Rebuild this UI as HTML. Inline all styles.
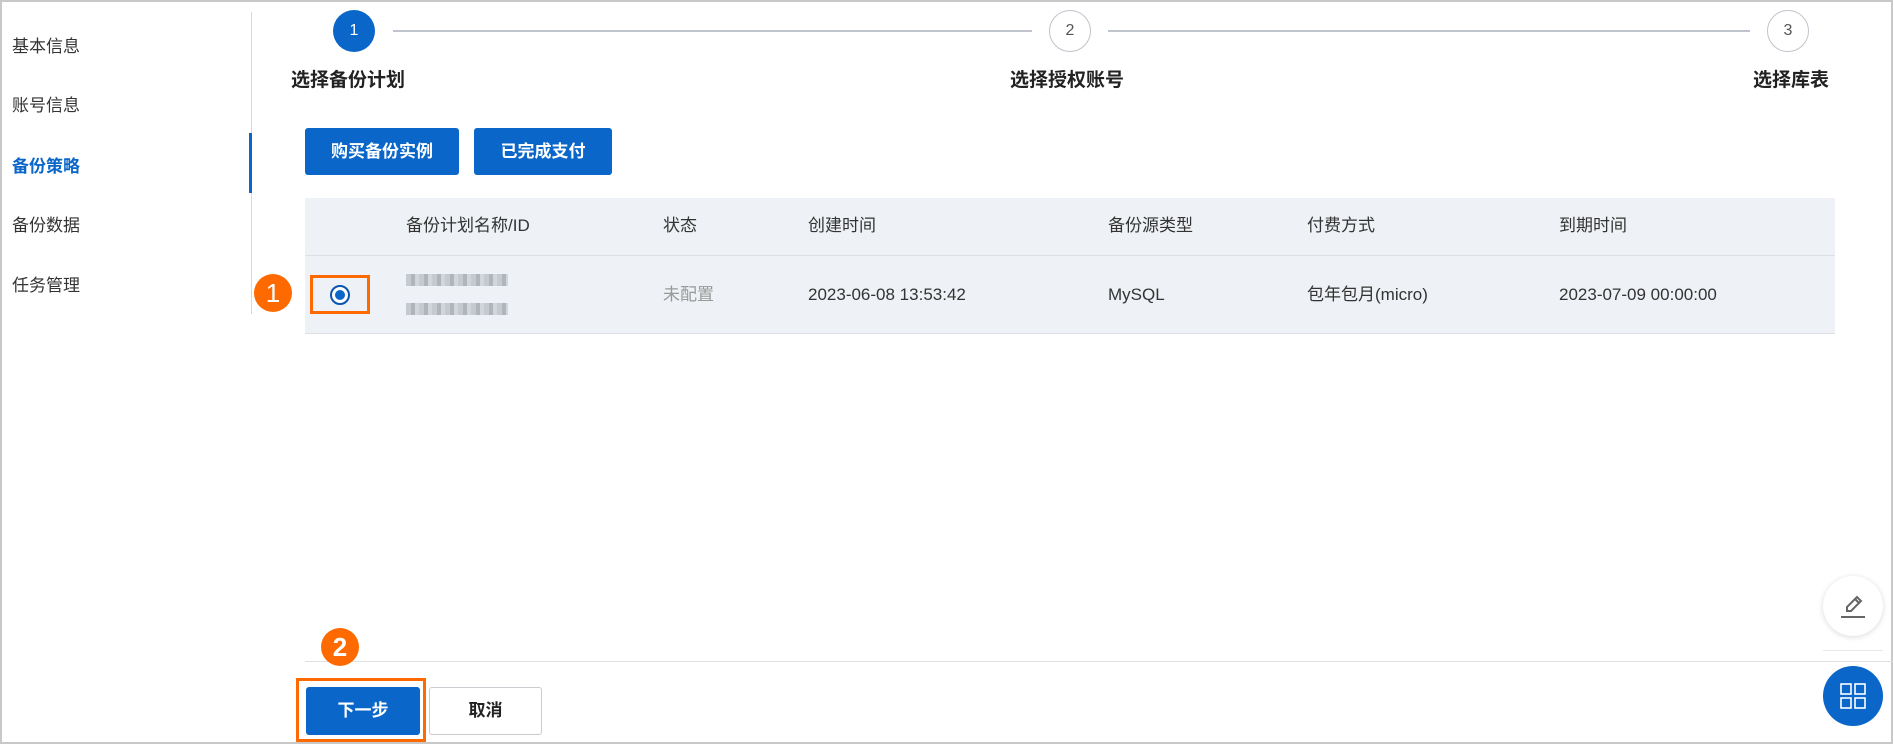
<!DOCTYPE html>
<html><head><meta charset="utf-8"><style>
*{margin:0;padding:0;box-sizing:border-box}
body{width:1893px;height:744px;position:relative;overflow:hidden;background:#fff;font-family:"Liberation Sans","Noto Sans CJK SC",sans-serif;color:#333}
.a{position:absolute}
.frame{left:0;top:0;width:1893px;height:744px;border:2px solid #c8c8c8}
.side{font-size:17px;color:#333;left:12px;line-height:20px}
.circ{width:42px;height:42px;border-radius:50%;text-align:center;line-height:42px;font-size:16px}
.lbl{font-size:19px;font-weight:bold;color:#222;top:70px;line-height:22px}
.btn{background:#0a66c8;color:#fff;font-weight:bold;font-size:17px;text-align:center;border-radius:3px}
.th{font-size:17px;color:#333;top:216px;line-height:20px}
.td{font-size:17px;color:#333;top:285px;line-height:20px}
.blur{background:repeating-linear-gradient(90deg,#c2c6cc 0 5px,#a9aeb6 5px 9px,#cfd3d8 9px 13px);height:12px;width:102px;left:406px;opacity:.9}
.oc{background:#ff6a00;color:#fff;border-radius:50%;text-align:center;font-size:26px}
</style></head><body>
<div class="a frame"></div>
<div class="a side" style="top:37px">基本信息</div>
<div class="a side" style="top:96px">账号信息</div>
<div class="a side" style="top:157px;color:#0a66c8;font-weight:bold">备份策略</div>
<div class="a side" style="top:216px">备份数据</div>
<div class="a side" style="top:276px">任务管理</div>
<div class="a" style="left:251px;top:12px;width:1px;height:302px;background:#d8d8d8"></div>
<div class="a" style="left:249px;top:133px;width:3px;height:60px;background:#0a66c8"></div>

<div class="a" style="left:393px;top:30px;width:639px;height:2px;background:#c0c4cc"></div>
<div class="a" style="left:1108px;top:30px;width:642px;height:2px;background:#c0c4cc"></div>
<div class="a circ" style="left:333px;top:10px;background:#0a66c8;color:#fff">1</div>
<div class="a circ" style="left:1049px;top:10px;border:1px solid #c0c4cc;color:#555;line-height:40px">2</div>
<div class="a circ" style="left:1767px;top:10px;border:1px solid #c0c4cc;color:#555;line-height:40px">3</div>
<div class="a lbl" style="left:291px">选择备份计划</div>
<div class="a lbl" style="left:1010px">选择授权账号</div>
<div class="a lbl" style="left:1753px">选择库表</div>

<div class="a btn" style="left:305px;top:128px;width:154px;height:47px;line-height:47px">购买备份实例</div>
<div class="a btn" style="left:474px;top:128px;width:138px;height:47px;line-height:47px">已完成支付</div>

<div class="a" style="left:305px;top:198px;width:1530px;height:136px;background:#eef1f5"></div>
<div class="a" style="left:305px;top:255px;width:1530px;height:1px;background:#dcdfe4"></div>
<div class="a" style="left:305px;top:333px;width:1530px;height:1px;background:#dcdfe4"></div>
<div class="a th" style="left:406px">备份计划名称/ID</div>
<div class="a th" style="left:663px">状态</div>
<div class="a th" style="left:808px">创建时间</div>
<div class="a th" style="left:1108px">备份源类型</div>
<div class="a th" style="left:1307px">付费方式</div>
<div class="a th" style="left:1559px">到期时间</div>
<div class="a blur" style="top:274px"></div>
<div class="a blur" style="top:303px"></div>
<div class="a td" style="left:663px;color:#999">未配置</div>
<div class="a td" style="left:808px">2023-06-08 13:53:42</div>
<div class="a td" style="left:1108px">MySQL</div>
<div class="a td" style="left:1307px">包年包月(micro)</div>
<div class="a td" style="left:1559px">2023-07-09 00:00:00</div>
<div class="a" style="left:310px;top:275px;width:60px;height:39px;border:3px solid #ff6a00"></div>
<div class="a" style="left:330px;top:285px;width:20px;height:20px;border-radius:50%;border:2px solid #0a55b0;background:#fff"></div>
<div class="a" style="left:335px;top:290px;width:10px;height:10px;border-radius:50%;background:#0a66c8"></div>
<div class="a oc" style="left:254px;top:274px;width:38px;height:38px;line-height:38px">1</div>

<div class="a" style="left:305px;top:661px;width:1588px;height:1px;background:#dcdfe4"></div>
<div class="a oc" style="left:321px;top:628px;width:38px;height:38px;line-height:38px;font-weight:bold">2</div>
<div class="a" style="left:296px;top:678px;width:130px;height:64px;border:3px solid #ff6a00"></div>
<div class="a btn" style="left:306px;top:687px;width:114px;height:48px;line-height:48px">下一步</div>
<div class="a" style="left:429px;top:687px;width:113px;height:48px;line-height:46px;border:1px solid #c8cbd0;border-radius:3px;text-align:center;font-weight:bold;font-size:17px;color:#222">取消</div>

<div class="a" style="left:1823px;top:576px;width:60px;height:60px;border-radius:50%;background:#fff;box-shadow:0 1px 6px rgba(0,0,0,.15)"></div>
<svg class="a" style="left:1838px;top:591px" width="30" height="30" viewBox="0 0 30 30"><path d="M9 20 L9 16 L19 6 L23 10 L13 20 Z M17 8 L21 12" fill="none" stroke="#666" stroke-width="2"/><path d="M3 26 H27" stroke="#666" stroke-width="2"/></svg>
<div class="a" style="left:1823px;top:650px;width:60px;height:1px;background:#e8e8e8"></div>
<div class="a" style="left:1823px;top:666px;width:60px;height:60px;border-radius:50%;background:#0a66c8"></div>
<svg class="a" style="left:1840px;top:683px" width="26" height="26" viewBox="0 0 26 26" fill="none" stroke="#fff" stroke-width="1.6"><rect x="1" y="1" width="10" height="10"/><rect x="15" y="1" width="10" height="10"/><rect x="1" y="15" width="10" height="10"/><rect x="15" y="15" width="10" height="10"/></svg>
</body></html>
